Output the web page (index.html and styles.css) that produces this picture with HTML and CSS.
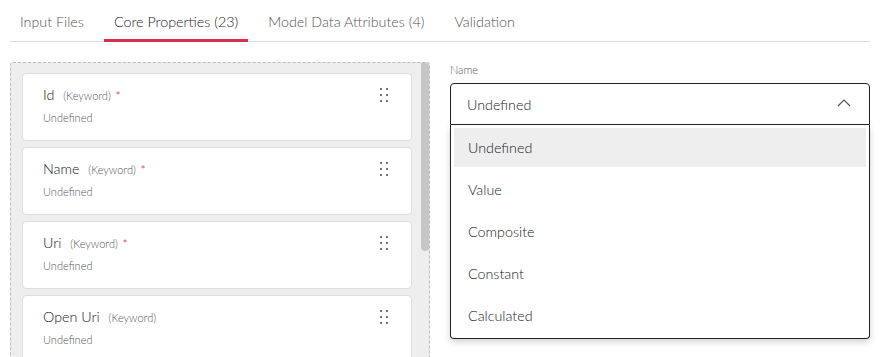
FILE: index.html
```html
<!DOCTYPE html>
<html lang="en">
<head>
    <meta charset="UTF-8">
    <meta name="viewport" content="width=device-width, initial-scale=1.0">
    <title>Core Properties</title>
    <link rel="stylesheet" href="styles.css">
</head>
<body>
<div class="tabs">
    <div class="tab">Input Files</div>
    <div class="tab active">Core Properties (23)</div>
    <div class="tab">Model Data Attributes (4)</div>
    <div class="tab">Validation</div>
</div>

<div class="main">
    <div class="panel">
        <div class="card-list">
            <div class="card">
                <div class="card-text">
                    <div class="card-title">Id <span class="type">(Keyword)</span><span class="req">*</span></div>
                    <div class="card-sub">Undefined</div>
                </div>
                <svg class="grip" width="10" height="16" viewBox="0 0 10 16">
                    <circle cx="2" cy="2" r="1.1"/><circle cx="8" cy="2" r="1.1"/>
                    <circle cx="2" cy="8" r="1.1"/><circle cx="8" cy="8" r="1.1"/>
                    <circle cx="2" cy="14" r="1.1"/><circle cx="8" cy="14" r="1.1"/>
                </svg>
            </div>
            <div class="card">
                <div class="card-text">
                    <div class="card-title">Name <span class="type">(Keyword)</span><span class="req">*</span></div>
                    <div class="card-sub">Undefined</div>
                </div>
                <svg class="grip" width="10" height="16" viewBox="0 0 10 16">
                    <circle cx="2" cy="2" r="1.1"/><circle cx="8" cy="2" r="1.1"/>
                    <circle cx="2" cy="8" r="1.1"/><circle cx="8" cy="8" r="1.1"/>
                    <circle cx="2" cy="14" r="1.1"/><circle cx="8" cy="14" r="1.1"/>
                </svg>
            </div>
            <div class="card">
                <div class="card-text">
                    <div class="card-title">Uri <span class="type">(Keyword)</span><span class="req">*</span></div>
                    <div class="card-sub">Undefined</div>
                </div>
                <svg class="grip" width="10" height="16" viewBox="0 0 10 16">
                    <circle cx="2" cy="2" r="1.1"/><circle cx="8" cy="2" r="1.1"/>
                    <circle cx="2" cy="8" r="1.1"/><circle cx="8" cy="8" r="1.1"/>
                    <circle cx="2" cy="14" r="1.1"/><circle cx="8" cy="14" r="1.1"/>
                </svg>
            </div>
            <div class="card">
                <div class="card-text">
                    <div class="card-title">Open Uri <span class="type">(Keyword)</span></div>
                    <div class="card-sub">Undefined</div>
                </div>
                <svg class="grip" width="10" height="16" viewBox="0 0 10 16">
                    <circle cx="2" cy="2" r="1.1"/><circle cx="8" cy="2" r="1.1"/>
                    <circle cx="2" cy="8" r="1.1"/><circle cx="8" cy="8" r="1.1"/>
                    <circle cx="2" cy="14" r="1.1"/><circle cx="8" cy="14" r="1.1"/>
                </svg>
            </div>
        </div>
        <div class="scroll-track">
            <div class="scroll-thumb"></div>
        </div>
    </div>

    <div class="field">
        <label class="field-label">Name</label>
        <div class="select">
            <span>Undefined</span>
            <svg class="chevron" width="14" height="8" viewBox="0 0 14 8">
                <polyline points="1,7 7,1 13,7" fill="none" stroke="#555" stroke-width="1.2"/>
            </svg>
        </div>
        <ul class="options">
            <li class="selected">Undefined</li>
            <li>Value</li>
            <li>Composite</li>
            <li>Constant</li>
            <li>Calculated</li>
        </ul>
    </div>
</div>
</body>
</html>
```

FILE: styles.css
```css
html, body {
    overflow: hidden;
}
body {
    font-family: Lato, "Open Sans", sans-serif;
    font-weight: 300;
    margin: 0;
    padding: 0 16px 0 10px;
    height: 357px;
    background: #fff;
    color: #222;
}
.tabs {
    display: flex;
    gap: 10px;
    border-bottom: 1px solid #ddd;
}
.tab {
    padding: 12px 10px 7px;
    line-height: 20px;
    font-size: 14.3px;
    color: #555;
    border-bottom: 3px solid transparent;
    margin-bottom: -1px;
}
.tab.active {
    color: #222;
    border-bottom-color: #d2304b;
}
.main {
    display: grid;
    grid-template-columns: 420px 420px;
    gap: 20px;
    margin-top: 20px;
}
.panel {
    display: flex;
    height: 300px;
    background: #eee;
    border: 1px dashed #bbb;
    border-radius: 3px;
    overflow: hidden;
}
.card-list {
    flex: 1;
    padding: 10px 9px 0 11px;
    display: flex;
    flex-direction: column;
    gap: 6px;
}
.card {
    display: flex;
    flex-shrink: 0;
    justify-content: space-between;
    align-items: flex-start;
    background: #fff;
    border: 1px solid #ddd;
    border-radius: 4px;
    padding: 11px 22px 15px 20px;
    height: 40px;
}
.card-title {
    font-size: 14.3px;
    line-height: 20px;
    color: #222;
}
.type {
    font-size: 11px;
    color: #555;
    margin-left: 5px;
}
.req {
    font-size: 11px;
    font-weight: 400;
    color: #e0525e;
    margin-left: 5px;
}
.card-sub {
    margin-top: 4px;
    font-size: 11px;
    line-height: 16px;
    color: #555;
}
.grip {
    margin-top: 2px;
    fill: #555;
}
.scroll-track {
    width: 8px;
}
.scroll-thumb {
    height: 188px;
    background: #c6c6c6;
    border-radius: 0 0 4px 4px;
}
.field-label {
    display: block;
    font-size: 11px;
    line-height: 16px;
    color: #555;
    margin-bottom: 5px;
}
.select {
    display: flex;
    justify-content: space-between;
    align-items: center;
    height: 40px;
    padding: 0 18px 0 16px;
    border: 1px solid #222;
    border-radius: 4px 4px 0 0;
    font-size: 14.3px;
    color: #222;
}
.chevron {
    margin-top: -2px;
}
.options {
    list-style: none;
    margin: 0;
    padding: 3px;
    border: 1px solid #222;
    border-top: none;
    border-radius: 0 0 4px 4px;
    box-shadow: 0 3px 6px rgba(0,0,0,0.18);
    display: flex;
    flex-direction: column;
    gap: 3px;
}
.options li {
    height: 39px;
    line-height: 39px;
    padding-left: 14px;
    font-size: 14.3px;
    color: #222;
}
.options li.selected {
    background: #eee;
}
```
